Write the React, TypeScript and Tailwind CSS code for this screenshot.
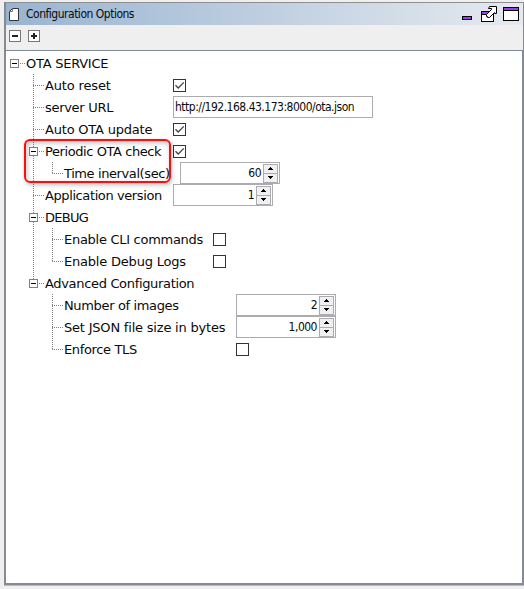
import React from "react";

type Branch = "root" | "leaf" | "node" | "lastNode" | "child" | "lastChild";

/* Dotted guide lines and the collapse box at the start of a tree row. */
function Guide({ kind, through = false }: { kind: Branch; through?: boolean }) {
  const deep = kind === "child" || kind === "lastChild";
  const width = kind === "root" ? 20 : deep ? 58 : 39;
  const boxX = kind === "root" ? 4 : 23;
  const hasBox = kind === "root" || kind === "node" || kind === "lastNode";
  return (
    <svg
      width={width}
      height="22"
      viewBox={`0 0 ${width} 22`}
      className="shrink-0"
      shapeRendering="crispEdges"
      fill="none"
      stroke="#808080"
    >
      {(kind === "leaf" || kind === "node" || (deep && through)) && (
        <path d="M27.5 0V22" strokeDasharray="1 1" />
      )}
      {kind === "lastNode" && <path d="M27.5 0V7" strokeDasharray="1 1" />}
      {kind === "leaf" && <path d="M27 11.5H38" strokeDasharray="1 1" />}
      {kind === "child" && <path d="M46.5 0V22" strokeDasharray="1 1" />}
      {kind === "lastChild" && <path d="M46.5 0V12" strokeDasharray="1 1" />}
      {deep && <path d="M46 11.5H57" strokeDasharray="1 1" />}
      {hasBox && (
        <>
          <rect x={boxX + 0.5} y="7.5" width="8" height="8" fill="#fff" />
          <path d={`M${boxX + 2} 11.5h5`} stroke="#000" />
          <path d={`M${boxX + 10} 11.5h5`} strokeDasharray="1 1" />
        </>
      )}
    </svg>
  );
}

function Checkbox({ checked = false }: { checked?: boolean }) {
  return (
    <span className="mt-[5px] block h-[13px] w-[13px] shrink-0 border border-[#333] bg-white">
      {checked && (
        <svg width="11" height="11" viewBox="0 0 11 11" fill="none" stroke="#444" strokeWidth="1.3">
          <path d="M1.5 5.3L4.2 8L9.8 2.4" />
        </svg>
      )}
    </span>
  );
}

function Arrow({ down = false }: { down?: boolean }) {
  return (
    <span className="flex h-[10px] w-[15px] items-center justify-center border border-[#acacb0] bg-[#f0f0f0] not-first:-mt-px">
      <svg width="5" height="3" viewBox="0 0 5 3" fill="#000" shapeRendering="crispEdges">
        <path d={down ? "M0 0h5v1h-1v1h-1v1h-1v-1h-1v-1h-1z" : "M2 0h1v1h1v1h1v1h-5v-1h1v-1h1z"} />
      </svg>
    </span>
  );
}

function Spinner({ value }: { value: string }) {
  return (
    <span className="flex h-[22px] w-[100px] shrink-0 items-center justify-end border border-[#acacb0] bg-white pr-px">
      <span className="mr-[2px] pt-px font-['DejaVu_Sans_Condensed','DejaVu_Sans',sans-serif] text-[12px] leading-[19px] tracking-[-0.5px]">
        {value}
      </span>
      <span className="flex flex-col">
        <Arrow />
        <Arrow down />
      </span>
    </span>
  );
}

interface RowProps {
  kind: Branch;
  through?: boolean;
  label: string;
  labelClass?: string;
  children?: React.ReactNode;
}

function Row({ kind, through, label, labelClass = "", children }: RowProps) {
  return (
    <div className="flex h-[22px] items-start">
      <Guide kind={kind} through={through} />
      <span className={`shrink-0 whitespace-nowrap leading-[24px] ${labelClass}`}>{label}</span>
      {children}
    </div>
  );
}

function ToggleAll({ plus = false }: { plus?: boolean }) {
  return (
    <span className="flex h-3 w-3 items-center justify-center border border-[#777] bg-white">
      <svg width="10" height="10" viewBox="0 0 10 10" fill="#222" shapeRendering="crispEdges">
        <path d="M2 4h6v2H2z" />
        {plus && <path d="M4 2h2v6H4z" />}
      </svg>
    </span>
  );
}

export default function App() {
  return (
    <div className="h-[589px] w-[524px] overflow-hidden bg-[#efefef] pt-[2px] pl-1 text-[#0a0a0a]">
      <div className="flex h-[583px] w-[520px] flex-col border-t border-r border-b-2 border-l-2 border-t-[#8e8e8e] border-r-[#8a8890] border-b-[#8a8890] border-l-[#8a8890] shadow-[0_1px_0_#bbb]">
        <header className="flex h-[22px] shrink-0 items-center bg-linear-to-r from-[#99b4d1] to-[#e6eaef]">
          <svg width="10" height="13" viewBox="0 0 10 13" className="ml-[3px] shrink-0">
            <path d="M3.5.5H9.5V12.5H.5V3.5z" fill="#fff" stroke="#333" />
            <path d="M3.5.5V3.5H.5" fill="none" stroke="#777" />
          </svg>
          <h1 className="ml-[7px] pt-px font-['DejaVu_Sans_Condensed','DejaVu_Sans',sans-serif] text-[12px] leading-[21px] tracking-[-0.49px]">
            Configuration Options
          </h1>
          <svg
            width="58"
            height="18"
            viewBox="0 0 58 18"
            shapeRendering="crispEdges"
            className="mr-[4px] ml-auto"
          >
            <path d="M1.5 11.5h9v3h-9z" fill="#9d3fe8" stroke="#000" />
            <path d="M20.5 6.5h12v10h-12z" fill="#fff" stroke="#000" />
            <path d="M21 7h11v2H21z" fill="#9d3fe8" />
            <path d="M21 9h11v1H21z" fill="#000" />
            <path
              d="M28.5 1.5H35.5V8.5H33.5V7.5L28.5 12.5H26.5V11.5H25.5V9.5L30.5 4.5V3.5H27.5z"
              fill="#fff"
              stroke="#000"
              shapeRendering="auto"
            />
            <path d="M42.5 2.5h15v13h-15z" fill="#fff" stroke="#000" />
            <path d="M43 3h14v2H43z" fill="#9d3fe8" />
            <path d="M42 5.5h16" stroke="#000" />
          </svg>
        </header>
        <div className="flex h-[25px] shrink-0 items-start gap-[7px] pt-[5px] pl-[3px]">
          <ToggleAll />
          <ToggleAll plus />
        </div>
        <main className="relative min-h-0 flex-1 border-t border-r border-[#7f8b99] bg-white pt-px font-['DejaVu_Sans',sans-serif] text-[13px]">
          <Row kind="root" label="OTA SERVICE" labelClass="tracking-[-0.25px]" />
          <Row kind="leaf" label="Auto reset" labelClass="w-[128px] tracking-[-0.15px]">
            <Checkbox checked />
          </Row>
          <Row kind="leaf" label="server URL" labelClass="w-[128px] tracking-[-0.3px]">
            <span className="h-[22px] w-[200px] border border-[#acacb0] bg-white pt-px pl-px font-['DejaVu_Sans_Condensed','DejaVu_Sans',sans-serif] text-[12px] leading-[19px] tracking-[-0.5px]">
              http://192.168.43.173:8000/ota.json
            </span>
          </Row>
          <Row kind="leaf" label="Auto OTA update" labelClass="w-[128px] tracking-[-0.2px]">
            <Checkbox checked />
          </Row>
          <Row kind="node" label="Periodic OTA check" labelClass="w-[128px] tracking-[-0.42px]">
            <Checkbox checked />
          </Row>
          <Row kind="lastChild" through label="Time inerval(sec)" labelClass="w-[116px] tracking-[-0.4px]">
            <Spinner value="60" />
          </Row>
          <Row kind="leaf" label="Application version" labelClass="w-[128px] tracking-[-0.4px]">
            <Spinner value="1" />
          </Row>
          <Row kind="node" label="DEBUG" labelClass="tracking-[-0.7px]" />
          <Row kind="child" through label="Enable CLI commands" labelClass="w-[149px] tracking-[-0.28px]">
            <Checkbox />
          </Row>
          <Row kind="lastChild" through label="Enable Debug Logs" labelClass="w-[149px] tracking-[-0.2px]">
            <Checkbox />
          </Row>
          <Row kind="lastNode" label="Advanced Configuration" labelClass="tracking-[-0.33px]" />
          <Row kind="child" label="Number of images" labelClass="w-[172px] tracking-[-0.35px]">
            <Spinner value="2" />
          </Row>
          <Row kind="child" label="Set JSON file size in bytes" labelClass="w-[172px] tracking-[-0.2px]">
            <Spinner value="1,000" />
          </Row>
          <Row kind="lastChild" label="Enforce TLS" labelClass="w-[172px] tracking-[-0.35px]">
            <Checkbox />
          </Row>
          <div className="pointer-events-none absolute top-[88px] left-[18px] h-[44px] w-[147px] rounded-[6px] border-2 border-[#fa0f0f] shadow-[1px_2px_4px_rgba(0,0,0,0.25),inset_1px_2px_5px_rgba(0,0,0,0.25)]" />
        </main>
      </div>
    </div>
  );
}
